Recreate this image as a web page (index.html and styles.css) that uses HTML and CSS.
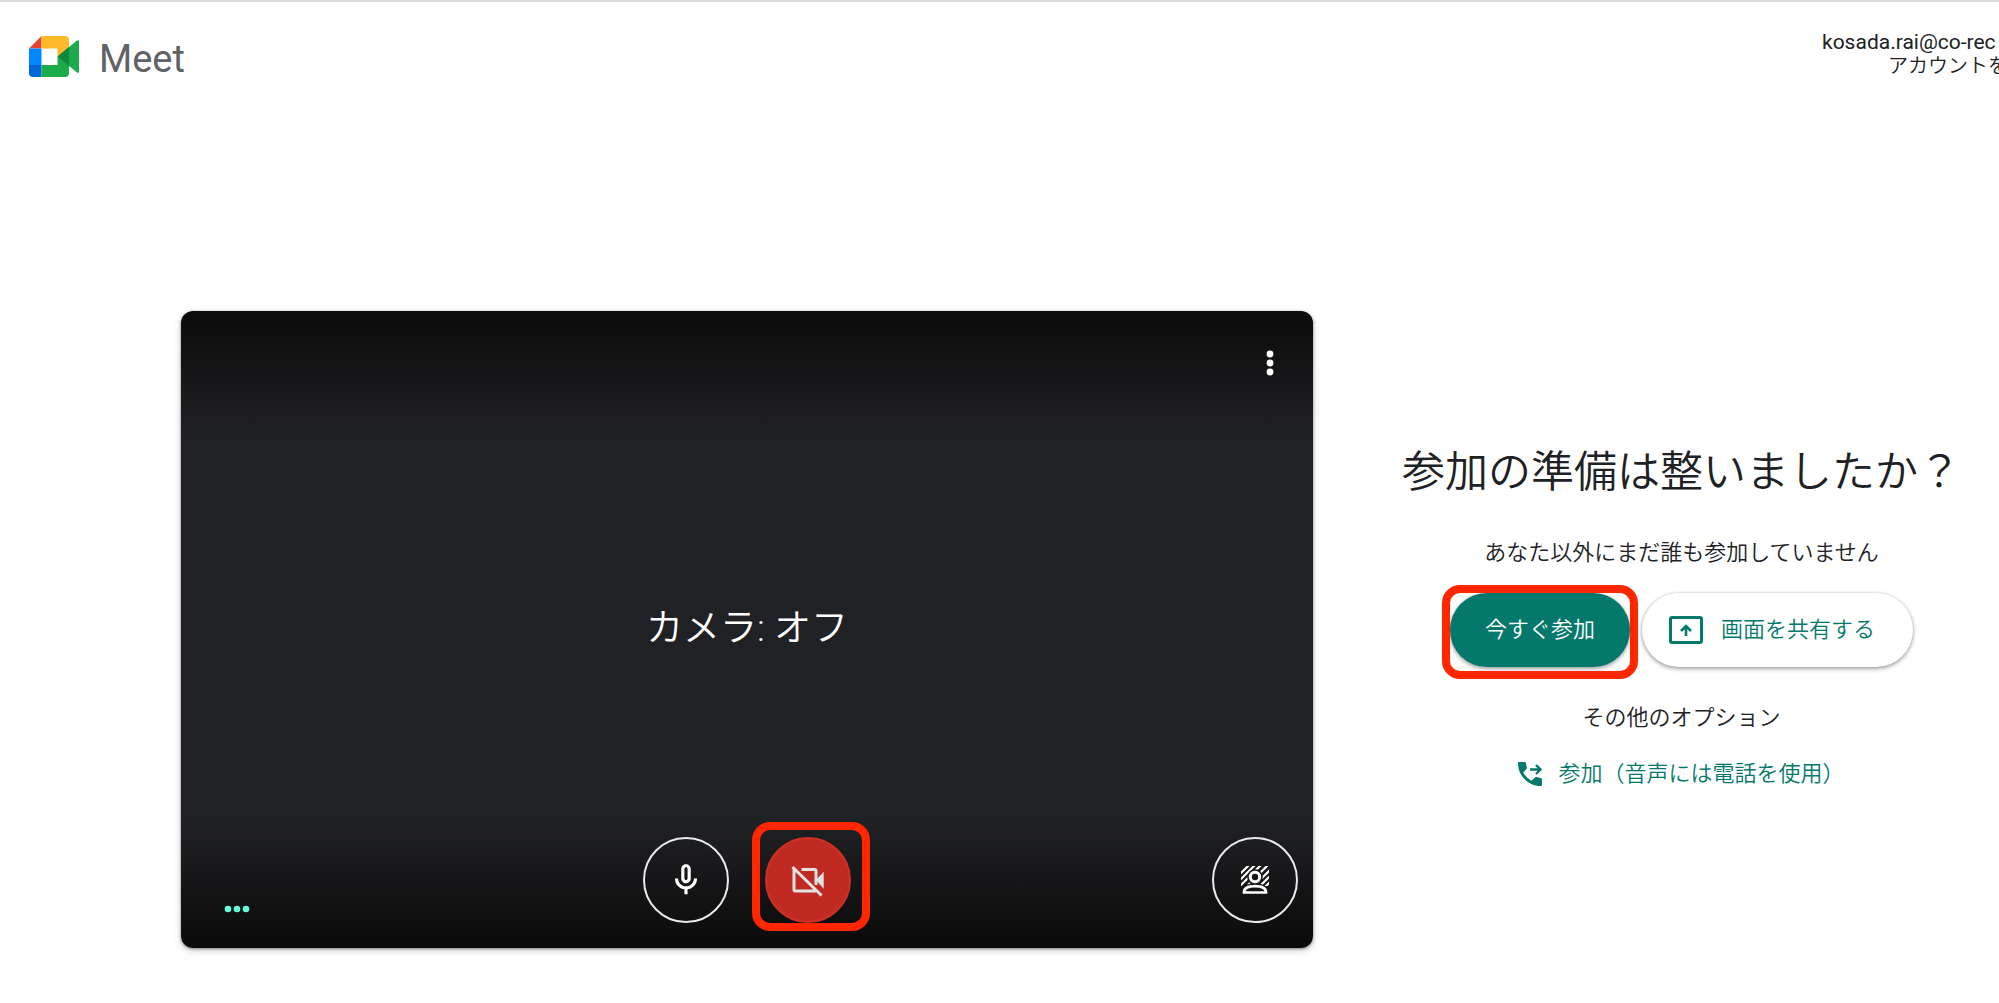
FILE: index.html
```html
<!DOCTYPE html>
<html lang="ja">
<head>
    <meta charset="UTF-8" />
    <meta name="viewport" content="width=device-width, initial-scale=1" />
    <title>Meet</title>
    <link rel="stylesheet" href="styles.css">
</head>
<body>

    <header class="header">
        <a class="brand" href="#">
            <svg class="logo" viewBox="0 0 50 41" aria-hidden="true">
                <path d="M0 12.5 12.5 0v12.5z" fill="#ea4335" />
                <path d="M0 12.5h12.5V29H0z" fill="#0086fe" />
                <path d="M0 29h12.5v12H4a4 4 0 0 1-4-4z" fill="#0066da" />
                <path d="M12.5 0H36a4 4 0 0 1 4 4v9.5L28.500 20.500v-8h-16z" fill="#ffba2b" />
                <path d="M12.500 29h16v-8.500L40 29v8a4 4 0 0 1-4 4H12.500z" fill="#1aab4b" />
                <path d="M28.500 20.500 48 4.500q2-1 2 1v30q0 2-2 1L40 30z" fill="#1aab4b" />
                <path d="M28.500 20.500 40 11v19z" fill="#12873b" />
            </svg>
            <span>Meet</span>
        </a>
        <div class="account">
            <div>kosada.rai@co-rec</div>
            <a class="switch" href="#">アカウントを</a>
        </div>
    </header>

    <main class="lobby">
        <section class="video">
            <div class="video-top">
                <button class="more" aria-label="その他">
                    <svg viewBox="0 0 8 26"><circle cx="4" cy="4" r="3.400" /><circle cx="4" cy="13" r="3.400" /><circle cx="4" cy="22" r="3.400" /></svg>
                </button>
            </div>
            <p class="camera-state">カメラ: オフ</p>
            <div class="controls">
                <svg class="level" viewBox="0 0 26 8" aria-hidden="true"><circle cx="4" cy="4" r="3.300" /><circle cx="13" cy="4" r="3.300" /><circle cx="22" cy="4" r="3.300" /></svg>
                <div class="devices">
                    <button class="round" aria-label="マイク">
                        <svg class="mic" viewBox="0 0 24 24"><path d="M12 14c1.660 0 3-1.340 3-3V5c0-1.660-1.340-3-3-3S9 3.340 9 5v6c0 1.660 1.340 3 3 3zm-1-9c0-.55.45-1 1-1s1 .45 1 1v6c0 .55-.45 1-1 1s-1-.45-1-1V5zm6 6c0 2.760-2.240 5-5 5s-5-2.240-5-5H5c0 3.530 2.610 6.430 6 6.920V21h2v-3.080c3.390-.49 6-3.390 6-6.920h-2z" /></svg>
                    </button>
                    <div class="marked marked-camera">
                        <button class="round off" aria-label="カメラ">
                            <svg class="cam" viewBox="0 0 36 36">
                                <path d="M2.500 5 31.500 33.500M4 7v20.500q0 1.500 1.500 1.500H26M11.500 7.500h13q1.500 0 1.500 1.500v14" fill="none" stroke="#e3e3e3" stroke-width="3" />
                                <path d="M26 18l7.700-8.300v17z" fill="#e3e3e3" />
                            </svg>
                        </button>
                    </div>
                </div>
                <button class="round" aria-label="視覚効果">
                    <svg class="effects" viewBox="0 0 28 28">
                        <mask id="person" maskUnits="userSpaceOnUse" x="0" y="0" width="28" height="28">
                            <path d="M0 0h28v20H0z" fill="#fff" />
                            <circle cx="14" cy="11" r="7.800" fill="#000" />
                            <ellipse cx="14" cy="25" rx="13" ry="8" fill="#000" />
                        </mask>
                        <path mask="url(#person)" d="M-1 8 8-1M-1 14 14-1M-1 20 20-1M7 19 27-1M15 18 30 3M19 20 30 9M22 23l8-8" fill="none" stroke="#fff" stroke-width="2.200" />
                        <circle cx="14" cy="11" r="4.700" fill="none" stroke="#fff" stroke-width="3" />
                        <path d="M3 26.500c0-4 4-6.300 11-6.300s11 2.300 11 6.300z" fill="none" stroke="#fff" stroke-width="2.700" />
                    </svg>
                </button>
            </div>
        </section>

        <section class="join">
            <h1>参加の準備は整いましたか？</h1>
            <p class="nobody">あなた以外にまだ誰も参加していません</p>
            <div class="actions">
                <div class="marked marked-join">
                    <button class="pill primary">今すぐ参加</button>
                </div>
                <button class="pill share">
                    <svg viewBox="0 0 34 28" aria-hidden="true">
                        <rect x="1.500" y="1.500" width="31" height="25" rx="1.500" fill="none" stroke="#04796b" stroke-width="3" />
                        <path d="M17 20v-9M12 15l5-5 5 5" fill="none" stroke="#04796b" stroke-width="2.600" />
                    </svg>
                    画面を共有する
                </button>
            </div>
            <p class="others">その他のオプション</p>
            <a class="phone" href="#">
                <svg viewBox="0 0 24 24" aria-hidden="true">
                    <path d="M1.300 0h5.400q1.100 0 1.300 1.200.2 2.300.9 4.500.2.800-.4 1.400L5.200 10.400a19 19 0 0 0 8.400 8.400l3.300-3.300q.6-.6 1.400-.4 2.200.7 4.500.9 1.200.2 1.200 1.300v5.400q0 1.300-1.300 1.300C10.200 24 0 13.800 0 1.300Q0 0 1.300 0z" fill="#04796b" />
                    <path d="M12 7.500h10M18 3l4.500 4.500L18 12" fill="none" stroke="#04796b" stroke-width="2.400" />
                </svg>
                参加（音声には電話を使用）
            </a>
        </section>
    </main>

</body>
</html>
```

FILE: styles.css
```css
* {
    box-sizing: border-box;
}

body {
    margin: 0;
    background-color: #fff;
    color: #202124;
    font-family: Roboto, "Noto Sans CJK JP", sans-serif;
    font-size: 22px;
    font-weight: 350;
    line-height: 32px;
    border-top: 2px solid #dadce0;
}

h1, p {
    margin: 0;
}

a {
    color: inherit;
    text-decoration: none;
}

button {
    font: inherit;
    border: none;
    padding: 0;
    cursor: pointer;
}

svg {
    display: block;
}

.header {
    display: flex;
    justify-content: space-between;
    align-items: flex-start;
    padding: 28px 0 0 29px;
    height: 112px;
}

.brand {
    display: flex;
    align-items: flex-start;
    gap: 20px;
    color: #5f6368;
    font-size: 38px;
    font-weight: 400;
    line-height: 58px;
}

.logo {
    width: 50px;
    height: 41px;
    margin-top: 6px;
}

.account {
    width: 177px;
    font-size: 21px;
    font-weight: 400;
    line-height: 24px;
    white-space: nowrap;
    overflow: hidden;
}

.switch {
    display: block;
    margin-left: 66px;
    font-size: 20px;
    font-weight: 350;
}

.lobby {
    display: flex;
    align-items: center;
    gap: 89px;
    padding: 197px 38px 48px 181px;
}

/* カメラのプレビュー */
.video {
    flex: 1;
    aspect-ratio: 16 / 9;
    display: flex;
    flex-direction: column;
    justify-content: space-between;
    border-radius: 12px;
    background: linear-gradient(#0b0b0b, #202124 128px, #202124 calc(100% - 128px), #0a0a0a);
    box-shadow: 0 1px 3px rgba(60, 64, 67, 0.6), 0 3px 8px rgba(60, 64, 67, 0.2);
    color: #fff;
}

.video-top {
    display: flex;
    justify-content: flex-end;
    height: 110px;
    padding: 39px 39px 0 0;
}

.more {
    width: 8px;
    height: 26px;
    background: none;
    fill: #fff;
}

.more svg {
    width: 8px;
    height: 26px;
}

.camera-state {
    text-align: center;
    font-size: 37px;
    line-height: 48px;
}

.controls {
    display: grid;
    grid-template-columns: 1fr auto 1fr;
    align-items: center;
    padding: 0 15px 25px 43px;
}

.controls > .round {
    justify-self: end;
}

.level {
    width: 26px;
    height: 8px;
    margin-top: 58px;
    fill: #64ffda;
}

.devices {
    display: flex;
    gap: 36px;
    margin-left: -28px;
}

.round {
    display: flex;
    align-items: center;
    justify-content: center;
    width: 86px;
    height: 86px;
    border: 2px solid #e8eaed;
    border-radius: 50%;
    background: none;
    fill: #fff;
}

.off {
    border-color: #d02f26;
    background-color: #c12a22;
}

.mic {
    width: 38px;
    height: 38px;
}

.cam {
    width: 36px;
    height: 36px;
}

.effects {
    width: 28px;
    height: 28px;
}

/* 赤い枠 */
.marked {
    position: relative;
}

.marked::after {
    content: "";
    position: absolute;
    border: 8px solid #ff2600;
    border-radius: 18px;
    pointer-events: none;
}

.marked-camera::after {
    inset: -15px -19px -8px -13px;
}

.marked-join::after {
    inset: -8px -8px -12px -8px;
}

.join {
    display: flex;
    flex-direction: column;
    align-items: center;
    padding-bottom: 25px;
    white-space: nowrap;
}

h1 {
    margin-bottom: 37px;
    font-size: 43px;
    font-weight: 350;
    line-height: 56px;
}

.actions {
    display: flex;
    gap: 12px;
    margin: 24px 0 35px;
}

.pill {
    display: flex;
    align-items: center;
    height: 74px;
    border-radius: 37px;
    box-shadow: 0 2px 4px rgba(60, 64, 67, 0.45), 0 0 3px rgba(60, 64, 67, 0.2);
}

.primary {
    padding: 0 35px;
    background-color: #04796b;
    color: #fff;
}

.share {
    gap: 18px;
    padding: 0 38px 0 27px;
    background-color: #fff;
    color: #04796b;
}

.share svg {
    width: 34px;
    height: 28px;
}

.others {
    margin-bottom: 24px;
}

.phone {
    display: flex;
    align-items: center;
    gap: 16px;
    color: #04796b;
}

.phone svg {
    width: 24px;
    height: 24px;
}
```
